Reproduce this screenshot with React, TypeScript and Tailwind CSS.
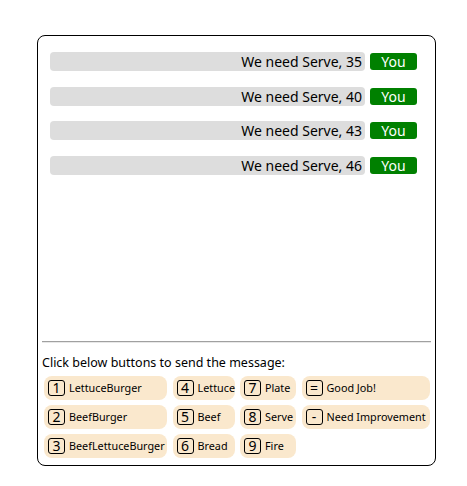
import React from 'react';

const messages = [35, 40, 43, 46];

const buttons: { key: string; label: string }[][] = [
  [
    { key: '1', label: 'LettuceBurger' },
    { key: '4', label: 'Lettuce' },
    { key: '7', label: 'Plate' },
    { key: '=', label: 'Good Job!' },
  ],
  [
    { key: '2', label: 'BeefBurger' },
    { key: '5', label: 'Beef' },
    { key: '8', label: 'Serve' },
    { key: '-', label: 'Need Improvement' },
  ],
  [
    { key: '3', label: 'BeefLettuceBurger' },
    { key: '6', label: 'Bread' },
    { key: '9', label: 'Fire' },
  ],
];

export default function App() {
  return (
    <div
      className="min-h-screen bg-white pt-[35px] pl-[37px]"
      style={{ fontFamily: '"Noto Sans", "Open Sans", sans-serif' }}
    >
      <div className="w-[399px] h-[431px] border border-black rounded-[8px] flex flex-col">
        <div className="flex-1 flex flex-col gap-[15.7px] pt-[16px] pl-[12px] pr-[18px]">
          {messages.map((n) => (
            <div key={n} className="flex items-center gap-[5px]">
              <div className="flex-1 h-[19px] bg-[#dddddd] rounded-[4px] text-right pr-[3px] text-[14px] leading-[19px] text-black">
                We need Serve, {n}
              </div>
              <div className="w-[47px] h-[17px] bg-[#008000] rounded-[3px] text-white text-center text-[14px] leading-[17px]">
                You
              </div>
            </div>
          ))}
        </div>

        <div className="mx-[4px] h-[2px] border-t border-[#a0a0a0] border-b border-b-[#e8e8e8]" />

        <div className="px-[4px] pt-[12px] pb-[7px]">
          <div className="text-[12.5px] leading-[16px] text-black mb-[5px]">
            Click below buttons to send the message:
          </div>
          <div className="ml-[2px] grid grid-cols-[123px_62px_56px_128px] gap-x-[5.5px] gap-y-[5px]">
            {buttons.flat().map((b) => (
              <div
                key={b.key}
                className="h-[24px] bg-[#fae8cd] rounded-[8px] flex items-center pl-[4px] gap-[4px] whitespace-nowrap"
              >
                <span className="shrink-0 w-[17px] h-[16px] border border-black rounded-[3px] flex items-center justify-center text-[14px] leading-none text-black">
                  {b.key}
                </span>
                <span className="text-[10.8px] text-black">{b.label}</span>
              </div>
            ))}
          </div>
        </div>
      </div>
    </div>
  );
}
